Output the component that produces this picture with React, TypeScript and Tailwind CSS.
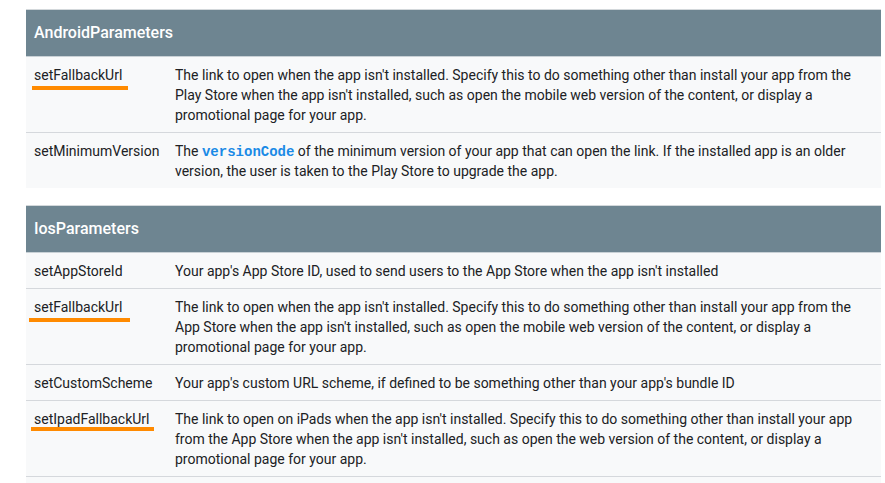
import React from "react";

type Row = {
    name: string;
    desc: React.ReactNode;
    mark?: { left: number; width: number; top: number };
};

const Code = ({ children }: { children: React.ReactNode }) => (
    <code className="font-['Liberation_Mono',monospace] font-bold leading-none text-[#1a8ae6]">{children}</code>
);

const androidRows: Row[] = [
    {
        name: "setFallbackUrl",
        desc: "The link to open when the app isn't installed. Specify this to do something other than install your app from the Play Store when the app isn't installed, such as open the mobile web version of the content, or display a promotional page for your app.",
        mark: { left: 6, width: 96, top: 21 },
    },
    {
        name: "setMinimumVersion",
        desc: (
            <>
                The <Code>versionCode</Code> of the minimum version of your app that can open the link. If the installed app is an older version, the user is taken to the Play Store to upgrade the app.
            </>
        ),
    },
];

const iosRows: Row[] = [
    {
        name: "setAppStoreId",
        desc: "Your app's App Store ID, used to send users to the App Store when the app isn't installed",
    },
    {
        name: "setFallbackUrl",
        desc: "The link to open when the app isn't installed. Specify this to do something other than install your app from the App Store when the app isn't installed, such as open the mobile web version of the content, or display a promotional page for your app.",
        mark: { left: 3, width: 101, top: 21 },
    },
    {
        name: "setCustomScheme",
        desc: "Your app's custom URL scheme, if defined to be something other than your app's bundle ID",
    },
    {
        name: "setIpadFallbackUrl",
        desc: "The link to open on iPads when the app isn't installed. Specify this to do something other than install your app from the App Store when the app isn't installed, such as open the web version of the content, or display a promotional page for your app.",
        mark: { left: 5, width: 123, top: 18 },
    },
];

const ParamTable = ({ title, rows, extra }: { title: string; rows: Row[]; extra?: boolean }) => (
    <div className="w-[855px] border-t border-[#d3d8db]">
        <div className="h-[47px] bg-[#6e8591] border-b border-[#c9d1d6] flex items-center px-2 text-base font-medium text-white">
            {title}
        </div>
        {rows.map((row, i) => (
            <div
                key={row.name}
                className={`flex bg-[#f8f9fa] text-sm leading-5 text-[#202124] ${i < rows.length - 1 || extra ? "border-b border-[#d5d8dc]" : ""}`}
            >
                <div className="relative w-[141px] shrink-0 px-2 pt-2 pb-[7px]">
                    {row.name}
                    {row.mark && (
                        <div
                            className="absolute h-[4px] bg-[#ff8a00]"
                            style={{ left: row.mark.left, width: row.mark.width, top: row.mark.top + 8 }}
                        />
                    )}
                </div>
                <div className="flex-1 px-2 pt-2 pb-[7px]">{row.desc}</div>
            </div>
        ))}
        {extra && <div className="h-10 bg-[#f8f9fa]" />}
    </div>
);

export default function App() {
    return (
        <div className="min-h-[483px] bg-white pl-[26px] pt-[9px] font-['Roboto',sans-serif] overflow-hidden">
            <ParamTable title="AndroidParameters" rows={androidRows} />
            <div className="h-[17px]" />
            <ParamTable title="IosParameters" rows={iosRows} extra />
        </div>
    );
}
